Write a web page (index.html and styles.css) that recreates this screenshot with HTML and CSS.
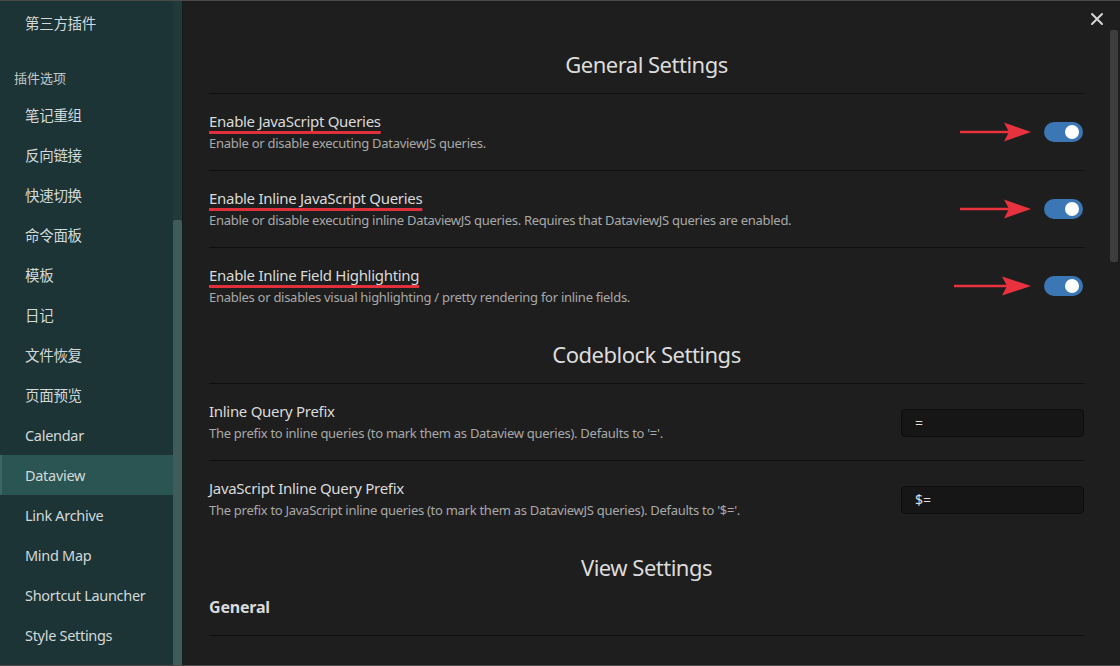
FILE: index.html
```html
<!DOCTYPE html>
<html lang="zh">
<head>
<meta charset="utf-8">
<link rel="stylesheet" href="styles.css">
<title>Settings</title>
</head>
<body>
<div class="window">
  <aside class="sidebar">
    <nav class="side-list">
      <div class="side-item">第三方插件</div>
      <div class="side-group">插件选项</div>
      <div class="side-item">笔记重组</div>
      <div class="side-item">反向链接</div>
      <div class="side-item">快速切换</div>
      <div class="side-item">命令面板</div>
      <div class="side-item">模板</div>
      <div class="side-item">日记</div>
      <div class="side-item">文件恢复</div>
      <div class="side-item">页面预览</div>
      <div class="side-item">Calendar</div>
      <div class="side-item active">Dataview</div>
      <div class="side-item">Link Archive</div>
      <div class="side-item">Mind Map</div>
      <div class="side-item">Shortcut Launcher</div>
      <div class="side-item">Style Settings</div>
    </nav>
    <div class="side-track"><div class="side-thumb"></div></div>
  </aside>
  <main class="content">
    <div class="pane">
      <h2 class="section-title lined first">General Settings</h2>

      <div class="setting lined">
        <div class="info">
          <div class="name"><span class="mark">Enable JavaScript Queries</span></div>
          <div class="desc">Enable or disable executing DataviewJS queries.</div>
        </div>
        <div class="control">
          <svg class="arrow" width="74" height="22" viewBox="0 0 74 22"><path d="M2 11 H52" stroke="#e8323e" stroke-width="2.4" fill="none"/><path d="M46 1.5 L73 11 L46 20.5 L51 11 Z" fill="#e8323e"/></svg>
          <div class="toggle"><div class="knob"></div></div>
        </div>
      </div>

      <div class="setting lined">
        <div class="info">
          <div class="name"><span class="mark">Enable Inline JavaScript Queries</span></div>
          <div class="desc">Enable or disable executing inline DataviewJS queries. Requires that DataviewJS queries are enabled.</div>
        </div>
        <div class="control">
          <svg class="arrow" width="74" height="22" viewBox="0 0 74 22"><path d="M2 11 H52" stroke="#e8323e" stroke-width="2.4" fill="none"/><path d="M46 1.5 L73 11 L46 20.5 L51 11 Z" fill="#e8323e"/></svg>
          <div class="toggle"><div class="knob"></div></div>
        </div>
      </div>

      <div class="setting">
        <div class="info">
          <div class="name"><span class="mark">Enable Inline Field Highlighting</span></div>
          <div class="desc">Enables or disables visual highlighting / pretty rendering for inline fields.</div>
        </div>
        <div class="control">
          <svg class="arrow wide" width="80" height="22" viewBox="0 0 80 22"><path d="M2 11 H56" stroke="#e8323e" stroke-width="2.4" fill="none"/><path d="M50 1.5 L79 11 L50 20.5 L55 11 Z" fill="#e8323e"/></svg>
          <div class="toggle"><div class="knob"></div></div>
        </div>
      </div>

      <h2 class="section-title lined">Codeblock Settings</h2>

      <div class="setting lined">
        <div class="info">
          <div class="name">Inline Query Prefix</div>
          <div class="desc">The prefix to inline queries (to mark them as Dataview queries). Defaults to '='.</div>
        </div>
        <div class="control">
          <div class="text-input">=</div>
        </div>
      </div>

      <div class="setting">
        <div class="info">
          <div class="name">JavaScript Inline Query Prefix</div>
          <div class="desc">The prefix to JavaScript inline queries (to mark them as DataviewJS queries). Defaults to '$='.</div>
        </div>
        <div class="control">
          <div class="text-input">$=</div>
        </div>
      </div>

      <h2 class="section-title open">View Settings</h2>

      <div class="setting heading lined">
        <div class="info">
          <div class="name">General</div>
        </div>
      </div>
    </div>
  </main>
  <div class="main-track"><div class="main-thumb"></div></div>
  <button class="close" aria-label="Close">
    <svg width="14" height="14" viewBox="0 0 14 14"><path d="M2 2 L12 12 M12 2 L2 12" stroke="#d6d6d6" stroke-width="2" stroke-linecap="round"/></svg>
  </button>
</div>
</body>
</html>
```

FILE: styles.css
```css
* { box-sizing: border-box; }
html, body {
  margin: 0;
  padding: 0;
  background: #1e1e1e;
}
body {
  font-family: "Noto Sans", "Noto Sans CJK SC", sans-serif;
  color: #dcddde;
}
.window {
  position: relative;
  width: 1120px;
  height: 666px;
  display: flex;
  overflow: hidden;
  border-top: 1px solid #4a4a4a;
  border-bottom: 1px solid #4a4a4a;
  background: #1e1e1e;
}
.sidebar {
  width: 183px;
  flex: none;
  display: flex;
  background: #1c3436;
  border-right: 1px solid #151a1a;
}
.side-list {
  flex: 1;
  display: flex;
  flex-direction: column;
  padding-top: 2px;
}
.side-item {
  height: 40px;
  line-height: 40px;
  padding-left: 25px;
  font-size: 14.5px;
  letter-spacing: -0.3px;
  color: #d3d9d8;
  white-space: nowrap;
}
.side-item.active {
  background: #2b5553;
  border-left: 2px solid #3b6763;
  padding-left: 23px;
}
.side-group {
  height: 52px;
  padding-top: 27px;
  padding-left: 14px;
  font-size: 13px;
  color: #c3cbca;
  line-height: 16px;
}
.side-track {
  width: 9px;
  flex: none;
  background: #20393a;
  padding-top: 219px;
}
.side-thumb {
  height: 460px;
  background: #3e5c5a;
  border-radius: 2px;
}
.content {
  flex: 1;
  min-width: 0;
  padding: 48px 26px 0 26px;
}
.section-title {
  margin: 0;
  text-align: center;
  font-size: 22px;
  font-weight: 400;
  letter-spacing: -0.5px;
  line-height: 30px;
  padding: 15px 0 14px;
  color: #dcdcdc;
}
.section-title.first {
  padding-top: 0;
}
.section-title.open {
  padding-bottom: 0;
}
.lined {
  border-bottom: 1px solid #0f0f0f;
}
.setting {
  display: flex;
  align-items: center;
  padding: 16px 0 16px;
  gap: 20px;
}
.info { flex: 1; min-width: 0; }
.name {
  font-size: 15px;
  letter-spacing: -0.3px;
  line-height: 22px;
  color: #dadada;
}
.mark {
  text-decoration: underline;
  text-decoration-color: #e0303c;
  text-decoration-thickness: 2.5px;
  text-underline-offset: 4px;
  text-decoration-skip-ink: none;
}
.desc {
  font-size: 13px;
  letter-spacing: -0.28px;
  line-height: 22px;
  color: #a9a9a9;
}
.control {
  flex: none;
  display: flex;
  align-items: center;
  gap: 12px;
}
.arrow { display: block; }
.toggle {
  width: 39px;
  height: 20px;
  margin-right: 1px;
  border-radius: 10px;
  background: #3a77b4;
  display: flex;
  align-items: center;
  justify-content: flex-end;
  padding-right: 4px;
}
.knob {
  width: 14px;
  height: 14px;
  border-radius: 50%;
  background: #ffffff;
}
.text-input {
  width: 183px;
  height: 28px;
  margin-top: 1px;
  background: #161616;
  border: 1px solid #0d0d0d;
  border-radius: 4px;
  padding-left: 13px;
  font-size: 14px;
  line-height: 26px;
  color: #dedede;
}
.setting.heading {
  padding: 14px 0 17px;
}
.setting.heading .name {
  font-size: 16px;
  font-weight: 700;
  letter-spacing: -0.2px;
}
.main-track {
  width: 10px;
  flex: none;
  padding-top: 29px;
  background: #1e1e1e;
}
.main-thumb {
  width: 8px;
  height: 232px;
  background: #3d3d3d;
  border-radius: 2px;
}
.close {
  position: absolute;
  top: 11px;
  right: 16px;
  width: 14px;
  height: 14px;
  padding: 0;
  border: 0;
  background: none;
}
.close svg { display: block; }
```
